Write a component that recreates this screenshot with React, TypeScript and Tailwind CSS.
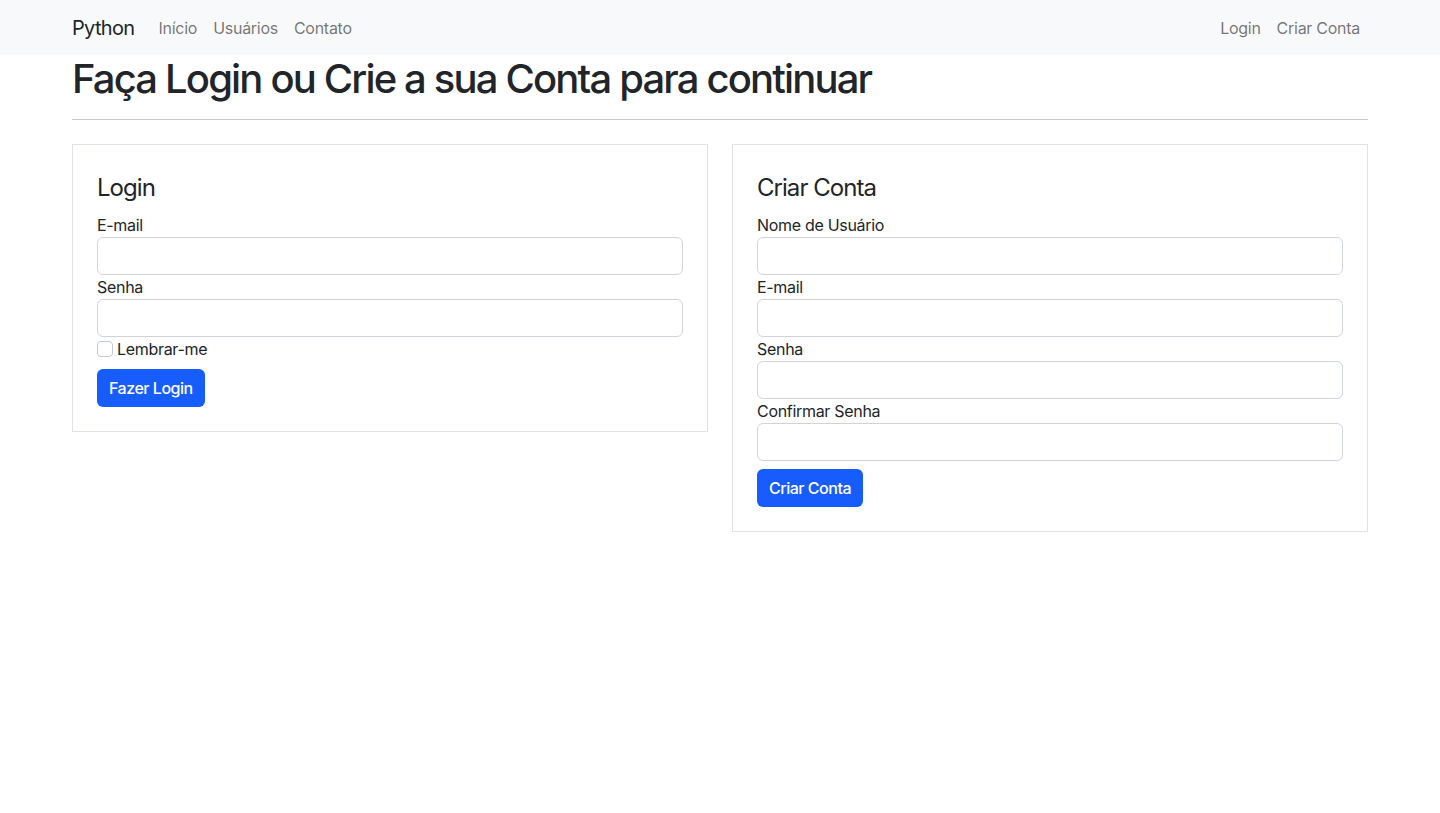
import React from 'react';

function Field({ label, type = 'text' }: { label: string; type?: string }) {
  return (
    <div>
      <label className="block text-base leading-6 tracking-[-0.019em]">{label}</label>
      <input
        type={type}
        className="block h-[38px] w-full rounded-[6px] border border-[#ced4da] bg-white px-3 text-base outline-none"
      />
    </div>
  );
}

function Card({ title, children }: { title: string; children: React.ReactNode }) {
  return (
    <div className="border border-[#dee2e6] p-6">
      <h3 className="mt-1 mb-[11px] text-2xl leading-[29px] font-normal tracking-[-0.04em]">{title}</h3>
      {children}
    </div>
  );
}

const navLink = 'block px-2 py-2 text-base tracking-[-0.017em] text-[rgba(0,0,0,0.55)]';

export default function App() {
  return (
    <div className="min-h-screen bg-white text-[#212529]" style={{ fontFamily: 'Inter, "Noto Sans", sans-serif' }}>
      {/* Navbar */}
      <nav className="h-[55px] bg-[#f8f9fa]">
        <div className="mx-auto flex h-full w-[1320px] items-center px-3">
          <a className="mr-4 text-xl leading-[30px] tracking-[-0.033em] text-[#212529]">Python</a>
          <ul className="flex">
            <li><a className={navLink}>Início</a></li>
            <li><a className={navLink}>Usuários</a></li>
            <li><a className={navLink}>Contato</a></li>
          </ul>
          <ul className="ml-auto flex">
            <li><a className={navLink}>Login</a></li>
            <li><a className={navLink}>Criar Conta</a></li>
          </ul>
        </div>
      </nav>

      <main className="mx-auto w-[1320px] px-3">
        <h1 className="text-[40px] leading-[48px] font-medium tracking-[-0.046em]">Faça Login ou Crie a sua Conta para continuar</h1>
        <hr className="mt-4 mb-6 border-t border-[#c8c9ca]" />

        <div className="grid grid-cols-2 items-start gap-6">
          <Card title="Login">
            <Field label="E-mail" type="email" />
            <Field label="Senha" type="password" />
            <label className="flex h-6 items-center text-base tracking-[-0.019em]">
              <span className="mr-1 inline-block h-4 w-4 rounded-[4px] border border-[#c4c8cc] bg-white" />
              Lembrar-me
            </label>
            <button className="mt-2 h-[38px] rounded-[6px] bg-[#175cfd] px-3 text-base font-medium tracking-[-0.03em] text-white">Fazer Login</button>
          </Card>

          <Card title="Criar Conta">
            <Field label="Nome de Usuário" />
            <Field label="E-mail" type="email" />
            <Field label="Senha" type="password" />
            <Field label="Confirmar Senha" type="password" />
            <button className="mt-2 h-[38px] rounded-[6px] bg-[#175cfd] px-3 text-base font-medium tracking-[-0.03em] text-white">Criar Conta</button>
          </Card>
        </div>
      </main>
    </div>
  );
}
